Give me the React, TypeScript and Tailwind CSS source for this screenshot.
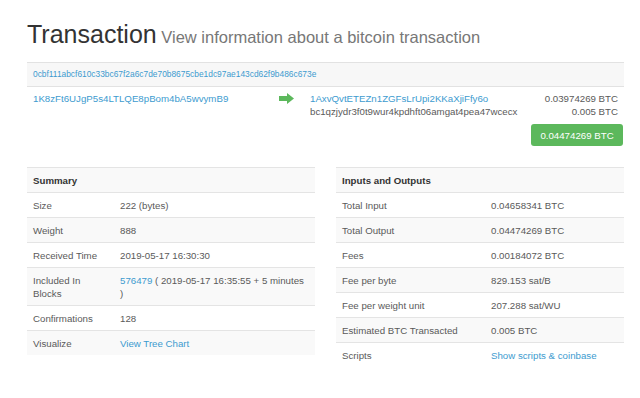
const link = 'text-[#3d9bcf]';

type Row = { label: string; value: React.ReactNode };

const summaryRows: Row[] = [
	{ label: 'Size', value: '222 (bytes)' },
	{ label: 'Weight', value: '888' },
	{ label: 'Received Time', value: '2019-05-17 16:30:30' },
	{
		label: 'Included In Blocks',
		value: (
			<>
				<span className={link}>576479</span> ( 2019-05-17 16:35:55 + 5 minutes )
			</>
		),
	},
	{ label: 'Confirmations', value: '128' },
	{ label: 'Visualize', value: <span className={link}>View Tree Chart</span> },
];

const ioRows: Row[] = [
	{ label: 'Total Input', value: '0.04658341 BTC' },
	{ label: 'Total Output', value: '0.04474269 BTC' },
	{ label: 'Fees', value: '0.00184072 BTC' },
	{ label: 'Fee per byte', value: '829.153 sat/B' },
	{ label: 'Fee per weight unit', value: '207.288 sat/WU' },
	{ label: 'Estimated BTC Transacted', value: '0.005 BTC' },
	{ label: 'Scripts', value: <span className={link}>Show scripts &amp; coinbase</span> },
];

const InfoTable: React.FC<{ title: string; rows: Row[]; labelWidth: string }> = ({ title, rows, labelWidth }) => (
	<table className="w-full table-fixed border-collapse text-left">
		<colgroup>
			<col className={labelWidth} />
			<col />
		</colgroup>
		<thead>
			<tr className="bg-[#f9f9f9] border-t border-[#e4e4e4]">
				<th colSpan={2} className="px-[6px] py-[5.5px] leading-[13px] font-bold text-[#333]">
					{title}
				</th>
			</tr>
		</thead>
		<tbody>
			{rows.map((r, i) => (
				<tr key={r.label} className={`border-t border-[#e4e4e4] ${i % 2 === 1 ? 'bg-[#f9f9f9]' : 'bg-white'}`}>
					<td className="px-[6px] py-[5.5px] leading-[13px] align-top">{r.label}</td>
					<td className="px-[6px] py-[5.5px] leading-[13px] align-top">{r.value}</td>
				</tr>
			))}
		</tbody>
	</table>
);

const App: React.FC = () => {
	return (
		<div
			className="w-[640px] h-[398px] bg-white text-[#5a5a5a] text-[9.7px] overflow-hidden"
			style={{ fontFamily: '"Liberation Sans", Arial, sans-serif' }}>
			<div className="ml-[27px] w-[597px] pt-[21px]">
				<h1 className="h-[27px] leading-[27px] text-[#333] whitespace-nowrap">
					<span className="text-[25px] leading-[27px]">Transaction</span>
					<span className="text-[16.5px] leading-[27px] text-[#777]"> View information about a bitcoin transaction</span>
				</h1>

				<div className="mt-[14px] h-[25px] bg-[#f7f7f7] border-y border-[#e2e2e2] flex items-center px-[6px]">
					<span className={`${link} text-[8.4px]`}>
						0cbf111abcf610c33bc67f2a6c7de70b8675cbe1dc97ae143cd62f9b486c673e
					</span>
				</div>

				<div className="flex pt-[5px] leading-[13px]">
					<div className="w-[252px] pl-[6px]">
						<span className={link}>1K8zFt6UJgP5s4LTLQE8pBom4bA5wvymB9</span>
					</div>
					<div className="w-[31px] pt-[1px]">
						<svg width="15" height="11" viewBox="0 0 15 11">
							<polygon points="0,3 8,3 8,0 15,5.5 8,11 8,8 0,8" fill="#5cb85c" />
						</svg>
					</div>
					<div className="flex-1 pr-[6px]">
						<div className="flex justify-between">
							<span className={link}>1AxvQvtETEZn1ZGFsLrUpi2KKaXjiFfy6o</span>
							<span>0.03974269 BTC</span>
						</div>
						<div className="flex justify-between">
							<span>bc1qzjydr3f0t9wur4kpdhft06amgat4pea47wcecx</span>
							<span>0.005 BTC</span>
						</div>
						<div className="flex justify-end mt-[6px] -mr-[5px]">
							<span className="bg-[#5cb85c] text-white rounded-[3px] h-[22px] w-[92px] flex items-center justify-center">
								0.04474269 BTC
							</span>
						</div>
					</div>
				</div>

				<div className="flex justify-between mt-[21px]">
					<div className="w-[288px]">
						<InfoTable title="Summary" rows={summaryRows} labelWidth="w-[87px]" />
					</div>
					<div className="w-[288px]">
						<InfoTable title="Inputs and Outputs" rows={ioRows} labelWidth="w-[149px]" />
					</div>
				</div>
			</div>
		</div>
	);
};

export default App;
